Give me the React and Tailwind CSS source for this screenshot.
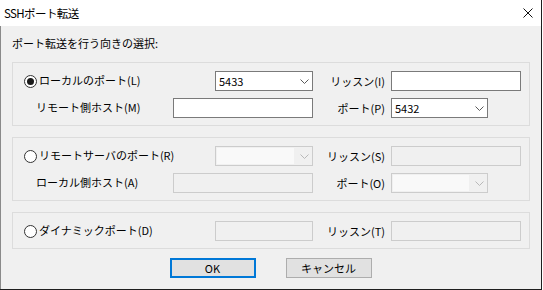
import React from "react";

const F = { fontFamily: '"Noto Sans CJK JP", "Noto Sans", sans-serif' };

function Radio({ checked }) {
  return (
    <div className="w-[13px] h-[13px] rounded-full border border-[#333333] bg-white flex items-center justify-center shrink-0">
      {checked && <div className="w-[7px] h-[7px] rounded-full bg-[#1a1a1a]" />}
    </div>
  );
}

function Chevron({ disabled }) {
  return (
    <svg width="9" height="5" viewBox="0 0 9 5" className="shrink-0">
      <polyline
        points="0.5,0.5 4.5,4.5 8.5,0.5"
        fill="none"
        stroke={disabled ? "#b8b8b8" : "#5a5a5a"}
        strokeWidth="1"
      />
    </svg>
  );
}

function Combo({ w, value, disabled }) {
  if (disabled) {
    return (
      <div className={`${w} h-[20px] border border-[#cccccc] bg-[#f0f0f0] flex items-center pl-[1px] pr-[3px] shrink-0`}>
        <div className="flex-1 h-[16px] bg-[#f9f9f9] mr-[6px]" />
        <Chevron disabled />
      </div>
    );
  }
  return (
    <div className={`${w} h-[20px] border border-[#7a7a7a] bg-white flex items-center pl-[3px] pr-[3px] shrink-0`}>
      <div className="flex-1 text-[11px] leading-[14px] text-black">{value}</div>
      <Chevron />
    </div>
  );
}

function Input({ w, disabled }) {
  return (
    <div
      className={`${w} h-[20px] border shrink-0 ${
        disabled ? "border-[#cccccc] bg-[#f0f0f0]" : "border-[#7a7a7a] bg-white"
      }`}
    />
  );
}

function Label({ children }) {
  return (
    <div className="w-[78px] pr-[6px] text-right text-[11px] leading-[14px] whitespace-nowrap shrink-0">
      {children}
    </div>
  );
}

export default function App() {
  return (
    <div className="w-[543px] h-[290px] bg-white text-black" style={F}>
      <div className="w-[542px] h-[290px] border-r border-b border-[#1e1e1e] flex flex-col">
        <div className="h-[26px] bg-white flex items-center shrink-0">
          <div className="pl-[4px] text-[11.5px] leading-[16px] tracking-[-0.6px]">SSHポート転送</div>
          <svg width="10" height="10" viewBox="0 0 10 10" className="ml-auto mr-[8px]">
            <line x1="0.5" y1="0.5" x2="9.5" y2="9.5" stroke="#111" strokeWidth="1" />
            <line x1="9.5" y1="0.5" x2="0.5" y2="9.5" stroke="#111" strokeWidth="1" />
          </svg>
        </div>
        <div className="flex-1 bg-[#f0f0f0] border-l border-[#8a8a8a] flex flex-col">
          <div className="h-[36px] pt-[10px] pl-[11px] text-[11px] leading-[14px] shrink-0">
            ポート転送を行う向きの選択:
          </div>

          {/* Group 1 */}
          <div className="ml-[11px] w-[518px] border border-[#dcdcdc] pt-[8px] pb-[7px] flex flex-col gap-[7px]">
            <div className="flex items-center h-[20px]">
              <div className="w-[202px] pl-[11px] flex items-center gap-[2px] shrink-0">
                <Radio checked />
                <span className="text-[11px] leading-[14px] whitespace-nowrap -mt-[3px]">ローカルのポート(L)</span>
              </div>
              <Combo w="w-[98px]" value="5433" />
              <Label>リッスン(I)</Label>
              <Input w="w-[130px]" />
            </div>
            <div className="flex items-center h-[20px]">
              <div className="w-[160px] pl-[23px] text-[11px] leading-[14px] whitespace-nowrap shrink-0 -mt-[3px]">
                リモート側ホスト(M)
              </div>
              <Input w="w-[140px]" />
              <Label>ポート(P)</Label>
              <Combo w="w-[97px]" value="5432" />
            </div>
          </div>

          {/* Group 2 */}
          <div className="mt-[11px] ml-[11px] w-[518px] border border-[#dcdcdc] pt-[8px] pb-[7px] flex flex-col gap-[7px]">
            <div className="flex items-center h-[20px]">
              <div className="w-[202px] pl-[11px] flex items-center gap-[2px] shrink-0">
                <Radio />
                <span className="text-[11px] leading-[14px] whitespace-nowrap -mt-[3px]">リモートサーバのポート(R)</span>
              </div>
              <Combo w="w-[98px]" disabled />
              <Label>リッスン(S)</Label>
              <Input w="w-[130px]" disabled />
            </div>
            <div className="flex items-center h-[20px]">
              <div className="w-[160px] pl-[23px] text-[11px] leading-[14px] whitespace-nowrap shrink-0 -mt-[3px]">
                ローカル側ホスト(A)
              </div>
              <Input w="w-[140px]" disabled />
              <Label>ポート(O)</Label>
              <Combo w="w-[97px]" disabled />
            </div>
          </div>

          {/* Group 3 */}
          <div className="mt-[11px] ml-[11px] w-[518px] border border-[#dcdcdc] pt-[8px] pb-[7px] flex flex-col">
            <div className="flex items-center h-[20px]">
              <div className="w-[202px] pl-[11px] flex items-center gap-[2px] shrink-0">
                <Radio />
                <span className="text-[11px] leading-[14px] whitespace-nowrap -mt-[3px]">ダイナミックポート(D)</span>
              </div>
              <Input w="w-[98px]" disabled />
              <Label>リッスン(T)</Label>
              <Input w="w-[130px]" disabled />
            </div>
          </div>

          <div className="mt-[9px] flex justify-center gap-[30px] pr-[1px]">
            <div className="w-[86px] h-[20px] border-2 border-[#0078d7] bg-[#e1e1e1] flex items-center justify-center text-[11px] leading-[14px]">
              OK
            </div>
            <div className="w-[86px] h-[20px] border border-[#adadad] bg-[#e1e1e1] flex items-center justify-center text-[11px] leading-[14px]">
              キャンセル
            </div>
          </div>
        </div>
      </div>
    </div>
  );
}
